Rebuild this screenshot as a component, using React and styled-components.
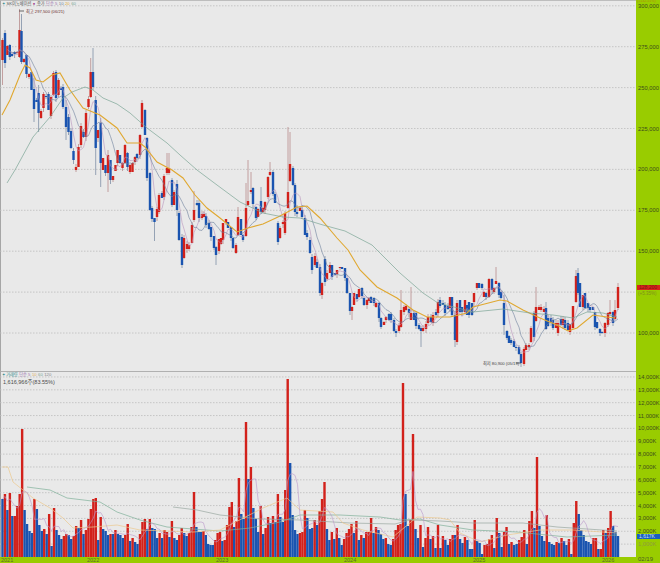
import React from 'react';
import styled, { createGlobalStyle } from 'styled-components';

const Global = createGlobalStyle`
  html, body { margin: 0; padding: 0; background: #e9e9e9; }
`;

const FONT = `"Liberation Sans", "Noto Sans CJK KR", sans-serif`;

const Page = styled.div`
  width: 660px;
  height: 563px;
  overflow: hidden;
  display: grid;
  grid-template-columns: 636px 24px;
  grid-template-rows: 371px 186px 6px;
  font-family: ${FONT};
  background: #99cc00;
`;
const Pane = styled.div`
  position: relative;
  background: #e9e9e9;
  border-left: 1px solid #a6a6a6;
  border-top: 1px solid ${p => p.$sep ? '#b0b0b0' : '#bdbdbd'};
  box-sizing: border-box;
`;
const Plot = styled.svg`
  position: absolute;
  left: -1px;
  top: -1px;
  display: block;
`;
const Axis = styled.div`
  position: relative;
  background: #99cc00;
`;
const Tick = styled.span`
  position: absolute;
  left: 2px;
  font-size: 5.8px;
  line-height: 6px;
  color: ${p => p.$c || '#3e4c1c'};
  white-space: nowrap;
`;
const TopNote = styled.span`
  position: absolute;
  left: 1px;
  top: 0;
  font-size: 3.6px;
  line-height: 3px;
  color: #b08a10;
  white-space: nowrap;
`;
const PriceBadge = styled.span`
  position: absolute;
  left: 1px;
  right: 0;
  height: 5px;
  font-size: 5px;
  line-height: 5px;
  padding-left: 2px;
  white-space: nowrap;
  background: ${p => p.$blue ? '#1a5fc0' : '#d8231c'};
  color: ${p => p.$blue ? '#cfe0f5' : '#7a1a10'};
`;
const SubNote = styled.span`
  position: absolute;
  left: 2px;
  font-size: 4.5px;
  line-height: 5px;
  color: #7f8f1c;
  white-space: nowrap;
`;
const Legend = styled.div`
  position: absolute;
  left: 1px;
  top: ${p => p.$top}px;
  display: flex;
  gap: 1.5px;
  align-items: center;
  font-size: 4.2px;
  line-height: 6px;
  white-space: nowrap;
  color: #555;
`;
const LegendItem = styled.span`
  color: ${p => p.$c || '#555'};
`;
const VolumeNote = styled.div`
  position: absolute;
  left: 2px;
  top: 7px;
  font-size: 5.5px;
  line-height: 7px;
  color: #4c4c4c;
  white-space: nowrap;
`;
const PriceMark = styled.div`
  position: absolute;
  left: ${p => p.$x}px;
  top: ${p => p.$y}px;
  font-size: 4.2px;
  line-height: 6px;
  color: ${p => p.$c};
  white-space: nowrap;
`;
const DateAxis = styled.div`
  position: relative;
  background: #99cc00;
  overflow: hidden;
`;
const DateLabel = styled.span`
  position: absolute;
  top: 0;
  font-size: 5.5px;
  line-height: 6px;
  color: #5c6a28;
`;
const Corner = styled.div`
  background: #99cc00;
  font-size: 6px;
  line-height: 6px;
  margin-top: -1px;
  padding-left: 2px;
  color: #4a5a20;
`;

const RED = '#d2211b';
const BLUE = '#1a54b0';

const RAW = [
2.5,60,40, 5,33,63, 7.4,55,46, 9.8,45,57, 12,54,56, 14.6,52,54, 17,53,52, 19.5,57,30, 21.5,31,62, 24,62,59,
26.5,55,74, 29,77,74, 31.5,72,90, 34,89,109, 36.5,100,102, 38.6,93,113, 41,118,111, 43.5,108,94, 46,96,97, 48.5,94,110,
51,116,97, 53.5,95,73, 56,72,98, 58.5,95,80, 61,88,90, 63,87,107, 66,107,127, 68.5,117,132, 71,131,148, 73.5,151,160,
76,170,167, 78.5,167,147, 81,145,126, 83.5,132,137, 86,137,113, 88.5,107,99, 90.7,97,72, 93,72,87, 95.7,100,148, 98,138,130,
100.7,123,163, 103,170,158, 105.5,165,173, 108,173,155, 110.5,160,180, 113,180,176, 115.5,171,165, 117.6,163,150, 120,155,163, 122.5,168,163,
125,163,145, 127.5,153,167, 130,172,165, 132.5,172,163, 135,162,157, 137,154,158, 140,155,135, 142,127,103, 145,110,135, 147,138,178,
150,173,210, 152,208,219, 154.5,218,222, 157,217,209, 159,212,195, 162,193,198, 164,197,176, 167,173,168, 169,173,168, 172,180,205,
174,205,192, 177,184,210, 179,213,240, 182,237,265, 184,258,238, 187,249,244, 189,249,245, 192,243,225, 194,220,210, 197,203,205,
199,203,218, 202,218,214, 204,217,214, 206,216,225, 209,223,229, 211,227,237, 214,236,248, 216,247,255, 219,251,239, 221,244,238,
223,240,223, 226,223,219, 228,222,228, 231,227,238, 233,238,248, 236,253,245, 238,235,217, 241,219,235, 243,235,240, 246,236,208,
248,205,201, 251,192,190, 253,188,204, 256,207,218, 258,217,209, 261,201,212, 263,212,208, 265,210,202, 268,197,177, 270,175,172,
273,172,194, 275,194,203, 278,223,242, 280,238,228, 283,224,222, 285,233,213, 288,208,192, 290,181,164, 293,168,185, 295,185,212,
297,212,214, 300,211,208, 302,210,217, 305,218,235, 307,233,237, 310,240,253, 312,257,270, 315,265,256, 317,262,268, 320,267,293,
322,295,283, 325,259,282, 327,279,273, 330,273,265, 332,265,277, 335,273,275, 337,274,270, 340,268,267, 342,267,269, 345,268,278,
347,278,293, 350,293,311, 352,311,307, 354,305,293, 357,294,299, 359,297,289, 362,288,296, 364,298,305, 367,305,300, 369,301,298,
371,297,303, 374,298,303, 376,307,303, 379,303,318, 381,318,327, 384,325,322, 386,320,317, 389,314,320, 391,314,320, 394,320,331,
396,331,333, 399,331,325, 401,327,310, 404,312,307, 406,310,306, 409,309,313, 411,320,313, 414,313,320, 416,313,326, 419,325,329,
421,328,331, 423,331,328, 426,329,324, 428,323,317, 431,317,322, 433,323,315, 436,312,315, 438,313,302, 440,300,306, 443,303,305,
445,305,313, 448,306,309, 450,308,297, 452,297,315, 455,315,340, 457,342,303, 460,300,312, 462,307,312, 465,312,300, 467,305,315,
469,302,315, 472,303,315, 474,302,293, 477,288,283, 479,283,288, 482,284,288, 484,297,292, 486,293,297, 489,297,279, 492,279,290,
494,292,288, 496,284,281, 499,283,295, 501,292,298, 504,303,325, 507,331,338, 509,336,343, 511,340,343, 514,341,347, 516,347,348,
519,347,354, 521,354,363, 524,364,349, 526,350,345, 529,347,345, 531,342,328, 534,313,337, 536,321,307, 539,310,307, 541,310,307,
544,312,309, 546,308,329, 548,318,326, 551,318,322, 553,320,328, 556,328,323, 558,333,323, 561,319,325, 563,325,319, 565,320,328,
568,323,330, 570,332,324, 573,328,306, 576,302,276, 578,273,293, 580,283,307, 583,307,295, 585,293,308, 588,303,308, 590,307,310,
593,307,310, 595,312,327, 597,322,328, 600,329,333, 602,332,333, 605,333,323, 608,325,313, 610,314,312, 613,312,323, 615,319,310, 618,308,287,
];

const WICKS = {
  2.5:[38,85], 5:[30,68], 19.5:[9,58], 21.5:[14,64], 34:[78,122], 38.6:[85,132], 66:[100,140], 90.7:[58,98], 93:[48,90],
  95.7:[96,175], 100.7:[118,187], 108:[150,192], 142:[100,128], 154.5:[218,241], 167:[153,175], 169:[153,175],
  177:[180,216], 194:[191,222], 216:[246,265], 246:[183,237], 248:[160,206], 251:[172,194], 261:[187,214], 270:[162,176],
  238:[207,236], 236:[243,254], 288:[127,209], 290:[132,182], 297:[205,217], 322:[282,299], 352:[306,320], 403:[290,318],
  401:[290,328], 411:[287,320], 421:[326,347], 455:[312,347], 457:[300,345], 497:[267,283], 496:[267,283], 504:[295,335],
  536:[287,322], 546:[302,330], 576:[270,303], 578:[268,295], 610:[300,316], 615:[300,320], 618:[283,310], 119:[140,172],
};

const candles = [];
for (let i = 0; i < RAW.length; i += 3) {
  const [x, o, c] = [RAW[i], RAW[i + 1], RAW[i + 2]];
  const h = (i * 7919) % 97;
  const w = WICKS[x];
  candles.push({
    x, o, c,
    hi: w ? w[0] : Math.min(o, c) - (h % 4),
    lo: w ? w[1] : Math.max(o, c) + ((h >> 2) % 5),
  });
}

const movAvg = (arr, n) =>
  arr.map((_, i) => {
    const s = arr.slice(Math.max(0, i - n + 1), i + 1);
    return s.reduce((a, b) => a + b, 0) / s.length;
  });

const closes = candles.map(c => c.c);
const ma5 = movAvg(closes, 5);
const ma10 = movAvg(closes, 10);

const pts = a => a.map(p => p.join(',')).join(' ');
const computed = (arr, xs, from = 0) => arr.map((v, i) => [xs[i], v.toFixed(1)]).slice(from);

const GREEN_LINE = [[7,183],[15,170],[33,137],[50,117],[63,98],[72,92],[85,87],[93,90],[103,98],[117,104],[130,113],[147,128],[167,143],[180,155],[197,170],[217,185],[240,202],[263,213],[283,217],[300,218],[323,225],[345,231],[372,245],[400,273],[423,293],[438,303],[450,306],[473,312],[503,309],[530,313],[553,315],[573,318],[587,312],[603,313],[617,317]];
const ORANGE_LINE = [[2,115],[10,100],[20,75],[25,65],[30,68],[36,80],[43,82],[52,75],[60,73],[70,90],[83,108],[100,115],[117,128],[127,143],[140,143],[145,147],[157,162],[172,170],[183,178],[195,195],[207,208],[220,218],[237,232],[248,228],[263,224],[278,217],[297,207],[307,206],[320,218],[337,238],[348,250],[360,270],[377,287],[397,298],[413,310],[427,317],[450,317],[467,313],[473,307],[500,300],[507,301],[523,310],[540,318],[557,325],[568,331],[577,328],[593,315],[607,317],[615,318]];

const VOL = [
-58,63,-47,64,-41,41,51,63,128,-47,-33,-26,-24,58,-48,-32,-26,28,-23,43,-11,49,-27,-22,-18,21,23,-22,-18,21,
31,-29,37,-23,27,38,48,58,59,-17,40,-28,-26,-22,23,-23,27,-23,-22,-19,22,33,-16,19,-15,-13,23,35,38,-28,
38,-29,-28,-19,24,-19,27,25,-20,36,-19,-17,22,29,-24,-21,24,30,65,-30,-25,-25,26,-22,-13,-12,-12,17,24,25,
-16,17,32,50,55,-30,36,79,-43,-38,135,-78,90,-49,-38,-25,51,-23,29,40,-34,41,-35,63,-40,-35,67,178,-94,-42,
-27,-23,24,25,47,-39,-28,-29,37,-32,46,58,75,-28,-17,25,-18,29,-19,-12,18,24,28,33,-24,36,-17,22,-19,25,
25,39,-24,30,-27,-23,-18,19,-13,-12,18,27,32,33,174,-63,-31,37,123,-28,-19,32,-10,19,30,-18,21,-9,32,-9,
21,-17,-12,18,22,-22,32,-18,-14,20,-17,-8,-8,37,-16,-14,-3,12,13,18,22,-9,39,-24,-10,25,30,-13,15,-12,
-13,17,20,27,-13,36,46,-29,100,-31,-21,-16,42,-15,-13,-12,15,-14,19,-16,-12,18,-3,34,56,-43,-27,-22,-16,-15,
-13,19,19,-8,8,27,-24,29,46,-31,-25,-21,
];
const BASE = 557;
const ANCHORS = [[0, 2.5], [78, 194], [100, 246], [117, 287.7], [164, 403], [178, 438], [207, 509], [218, 537], [VOL.length - 1, 618]];
const volX = i => {
  for (let k = 1; k < ANCHORS.length; k++) {
    const [a, xa] = ANCHORS[k - 1];
    const [b, xb] = ANCHORS[k];
    if (i <= b) return xa + ((i - a) * (xb - xa)) / (b - a);
  }
  return 618;
};
const bars = VOL.map((v, i) => ({ x: volX(i), h: Math.abs(v), up: v > 0 }));
const volMA5 = movAvg(bars.map(b => BASE - b.h), 5);

const VOL_ORANGE = [[2,467],[8,467],[13,482],[23,490],[33,498],[50,508],[63,518],[73,528],[93,527],[117,525],[140,530],[167,531],[193,532],[220,530],[263,508],[287,498],[300,510],[333,512],[343,523],[363,530],[393,537],[417,517],[440,518],[450,520],[460,533],[480,542],[507,535],[540,530],[573,530],[617,533]];
const VOL_GREEN = [[27,487],[50,490],[67,498],[100,502],[117,512],[140,520],[167,527],[193,529],[220,531],[250,528],[280,522],[300,515],[340,515],[380,517],[400,520],[420,519],[440,525],[473,530],[517,532],[567,537],[617,535]];
const VOL_GRAY = [[173,507],[197,510],[220,515],[260,519],[300,520],[350,523],[395,524],[410,520],[440,521],[473,523],[523,523],[557,527],[617,531]];

const PRICE_TICKS = [300, 275, 250, 225, 200, 175, 150, 125, 100].map(v => ({ v, y: 333 - ((v - 100) / 25) * 40.9 }));
const VOL_TICKS = Array.from({ length: 14 }, (_, i) => ({ v: i + 1, y: BASE - (i + 1) * 12.86 }));
const YEARS = [[2021, 1], [2022, 87], [2023, 216], [2024, 344], [2025, 473], [2026, 602]];

const Candle = ({ c }) => {
  const up = c.c < c.o;
  const top = Math.min(c.o, c.c);
  const h = Math.max(1, Math.abs(c.o - c.c));
  return (
    <g>
      <line x1={c.x} x2={c.x} y1={c.hi} y2={c.lo} stroke={up ? '#b88c8c' : '#7f8fa6'} strokeWidth="0.8" />
      <rect x={c.x - 1.2} y={top} width="2.4" height={h} fill={up ? RED : BLUE} />
    </g>
  );
};

const xs = candles.map(c => c.x);

export default function App() {
  return (
    <Page>
      <Global />
      <Pane>
        <Plot width="636" height="371" viewBox="0 0 636 371">
          {PRICE_TICKS.map(t => (
            <line key={t.v} x1="0" x2="636" y1={t.y} y2={t.y} stroke="#bcbcbc" strokeWidth="0.8" strokeDasharray="1.5 1.5" />
          ))}
          {candles.map(c => <Candle key={c.x} c={c} />)}
          <polyline points={pts(computed(ma5, xs, 2))} fill="none" stroke="#b894bc" strokeWidth="0.6" />
          <polyline points={pts(computed(ma10, xs, 3))} fill="none" stroke="#6d7f9c" strokeWidth="0.6" />
          <polyline points={pts(ORANGE_LINE)} fill="none" stroke="#e0a830" strokeWidth="1.1" />
          <polyline points={pts(GREEN_LINE)} fill="none" stroke="#7ba595" strokeWidth="0.7" />
          <line x1="19" x2="24" y1="11" y2="11" stroke="#333" strokeWidth="0.7" />
          <line x1="516" x2="521" y1="363" y2="363" stroke="#333" strokeWidth="0.7" />
        </Plot>
        <Legend $top={0}>
          <LegendItem $c="#3a8f8f">✦</LegendItem>
          <LegendItem>SK이노베이션</LegendItem>
          <LegendItem $c="#a0408a">●</LegendItem>
          <LegendItem>종가</LegendItem>
          <LegendItem $c="#a078b0">단순 5</LegendItem>
          <LegendItem $c="#6d7f9c">10</LegendItem>
          <LegendItem $c="#e0a93a">20</LegendItem>
          <LegendItem $c="#7ba595">60</LegendItem>
        </Legend>
        <PriceMark $x={25} $y={8} $c="#6a3030">최고 297,500 (06/21)</PriceMark>
        <PriceMark $x={482} $y={360} $c="#444">최저 80,900 (05/19)</PriceMark>
      </Pane>
      <Axis>
        <TopNote>(+132.51%)</TopNote>
        {PRICE_TICKS.filter(t => t.v !== 125).map(t => (
          <Tick key={t.v} style={{ top: t.y - 3 }}>{t.v},000</Tick>
        ))}
        <PriceBadge style={{ top: 285 }}>128,200</PriceBadge>
        <SubNote style={{ top: 291 }}>(+5.35%)</SubNote>
      </Axis>

      <Pane $sep>
        <Plot width="636" height="186" viewBox="0 371 636 186">
          {VOL_TICKS.map(t => (
            <line key={t.v} x1="0" x2="636" y1={t.y} y2={t.y} stroke="#bcbcbc" strokeWidth="0.8" strokeDasharray="1.5 1.5" />
          ))}
          {bars.map(b => (
            <rect key={b.x} x={b.x - 1.2} y={BASE - b.h} width="2.4" height={b.h} fill={b.up ? RED : BLUE} />
          ))}
          <polyline points={pts(VOL_GREEN)} fill="none" stroke="#7fb09a" strokeWidth="0.7" />
          <polyline points={pts(VOL_GRAY)} fill="none" stroke="#9aa8a0" strokeWidth="0.7" />
          <polyline points={pts(VOL_ORANGE)} fill="none" stroke="#ecc98e" strokeWidth="0.7" />
          <polyline points={pts(computed(volMA5, bars.map(b => b.x)))} fill="none" stroke="#b995c9" strokeWidth="0.6" />
        </Plot>
        <Legend $top={0}>
          <LegendItem $c="#3a8f8f">✦ 거래량</LegendItem>
          <LegendItem $c="#a078b0">단순 5</LegendItem>
          <LegendItem $c="#e0b060">10</LegendItem>
          <LegendItem $c="#7ba595">60</LegendItem>
          <LegendItem $c="#888">120</LegendItem>
        </Legend>
        <VolumeNote>1,616,966주(83.55%)</VolumeNote>
      </Pane>
      <Axis>
        {VOL_TICKS.map(t => (
          <Tick key={t.v} $c={t.v === 1 ? '#8f9a40' : undefined} style={{ top: t.y - 371 - 3 }}>{t.v},000K</Tick>
        ))}
        <PriceBadge $blue style={{ top: 163 }}>1,617K</PriceBadge>
      </Axis>

      <DateAxis>
        {YEARS.map(([y, x]) => <DateLabel key={y} style={{ left: x }}>{y}</DateLabel>)}
      </DateAxis>
      <Corner>02/19</Corner>
    </Page>
  );
}
